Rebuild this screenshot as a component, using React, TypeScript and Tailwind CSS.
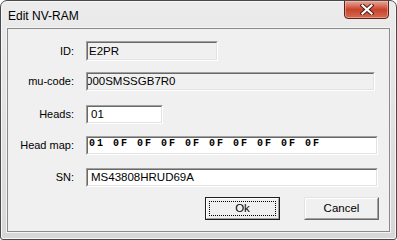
import React from "react";

const font = { fontFamily: '"Liberation Sans", Arial, sans-serif' };

function Field({
  outer,
  inner,
  children,
}: {
  outer: string;
  inner: string;
  children?: React.ReactNode;
}) {
  return (
    <div className={`border border-t-[#a0a0a0] border-l-[#a0a0a0] border-b-white border-r-white ${outer}`}>
      <div className={`h-full border border-t-[#696969] border-l-[#696969] border-b-[#e3e3e3] border-r-[#e3e3e3] overflow-hidden ${inner}`}>
        {children}
      </div>
    </div>
  );
}

function Row({
  label,
  className,
  children,
}: {
  label: string;
  className: string;
  children: React.ReactNode;
}) {
  return (
    <div className={`flex items-center ${className}`}>
      <div className="w-[66px] text-right text-[11px] leading-[13px] text-black">{label}</div>
      <div className="ml-[12px]">{children}</div>
    </div>
  );
}

export default function App() {
  return (
    <div className="w-[397px] h-[240px] bg-white" style={font}>
      <div className="relative w-[397px] h-[240px] flex flex-col rounded-t-[7px] rounded-b-[3px] border border-[#4a4a4a] bg-gradient-to-b from-[#ececec] to-[#d7d7d7] shadow-[inset_0_0_0_1px_#f7f7f7] overflow-hidden">
        {/* title bar */}
        <div className="h-[27px] flex items-start justify-between shrink-0">
          <div className="pl-[7px] pt-[8px] text-[12px] leading-[15px] text-black">Edit NV-RAM</div>
          <div className="mr-[7px] w-[45px] h-[19px] -mt-px rounded-b-[4px] border border-[#5b2219] bg-gradient-to-b from-[#e8a597] via-[#c9432c] to-[#d26a52] flex items-center justify-center shadow-[inset_0_0_0_1px_rgba(255,200,190,0.5)]">
            <svg width="14" height="11" viewBox="0 0 14 11">
              <path d="M2.5 1.5 L11.5 9.5 M11.5 1.5 L2.5 9.5" stroke="#4a1a12" strokeWidth="4" strokeLinecap="square" />
              <path d="M2.5 1.5 L11.5 9.5 M11.5 1.5 L2.5 9.5" stroke="#ffffff" strokeWidth="2.2" strokeLinecap="square" />
            </svg>
          </div>
        </div>
        {/* client area */}
        <div className="flex-1 px-[6px] pb-[7px] flex">
          <div className="flex-1 border border-[#8a8a8a] bg-[#f0f0f0] flex flex-col pt-[12px] shadow-[0_0_0_1px_#f4f4f4]">
            <Row label="ID:" className="">
              <Field outer="w-[132px] h-[20px]" inner="bg-[#f0f0f0] pl-px">
                <div className="text-[11.5px] leading-[16px] text-black">E2PR</div>
              </Field>
            </Row>
            <Row label="mu-code:" className="mt-[11px]">
              <Field outer="w-[289px] h-[19px]" inner="bg-[#f0f0f0]">
                <div className="text-[11.5px] leading-[15px] text-black -ml-[2px]">000SMSSGB7R0</div>
              </Field>
            </Row>
            <Row label="Heads:" className="mt-[14px]">
              <Field outer="w-[77px] h-[19px]" inner="bg-white pl-[3px]">
                <div className="text-[11.5px] leading-[15px] text-black">01</div>
              </Field>
            </Row>
            <Row label="Head map:" className="mt-[12px]">
              <Field outer="w-[292px] h-[19px]" inner="bg-white pl-px">
                <div
                  className="text-[10px] leading-[9px] font-bold tracking-[2px] text-black whitespace-pre pt-px"
                  style={{ fontFamily: '"Liberation Mono", "Courier New", monospace' }}
                >
                  01 0F 0F 0F 0F 0F 0F 0F 0F 0F
                </div>
              </Field>
            </Row>
            <Row label="SN:" className="mt-[13px]">
              <Field outer="w-[292px] h-[19px]" inner="bg-white pl-[3px]">
                <div className="text-[11.5px] leading-[15px] text-black">MS43808HRUD69A</div>
              </Field>
            </Row>
            <div className="flex mt-[10px] pl-[197px]">
              <div className="w-[75px] h-[23px] border border-[#1e1e1e] bg-[#f0f0f0]">
                <div className="h-full border border-t-white border-l-white border-b-[#a0a0a0] border-r-[#a0a0a0] p-[2px]">
                  <div className="h-full border border-dotted border-black flex items-center justify-center text-[11.5px] leading-[13px] text-black">
                    Ok
                  </div>
                </div>
              </div>
              <div className="ml-[24px] w-[75px] h-[23px] border border-t-[#e3e3e3] border-l-[#e3e3e3] border-b-[#696969] border-r-[#696969] bg-[#f0f0f0]">
                <div className="h-full border border-t-white border-l-white border-b-[#a0a0a0] border-r-[#a0a0a0] flex items-center justify-center text-[11.5px] leading-[13px] text-black">
                  Cancel
                </div>
              </div>
            </div>
          </div>
        </div>
      </div>
    </div>
  );
}
